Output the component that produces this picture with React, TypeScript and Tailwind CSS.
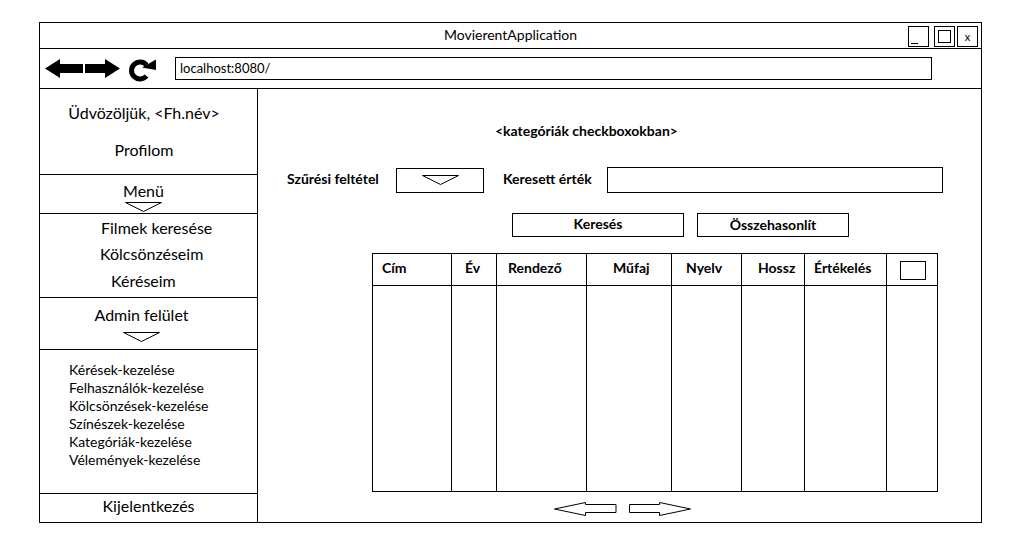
import React from "react";

const font = { fontFamily: "Lato, 'Open Sans', sans-serif" };

function DownTriangle({ w = 38, h = 11 }: { w?: number; h?: number }) {
  return (
    <svg width={w} height={h} viewBox={`0 0 ${w} ${h}`} className="block">
      <polygon points={`0.5,0.5 ${w - 0.5},0.5 ${w / 2},${h - 0.5}`} fill="white" stroke="black" strokeWidth="1" />
    </svg>
  );
}

function NavArrows() {
  return (
    <div className="flex items-center">
      <svg width="38" height="19" viewBox="0 0 38 19" className="block">
        <polygon points="0,9.5 15,0 15,5 38,5 38,14 15,14 15,19" fill="black" />
      </svg>
      <svg width="35" height="19" viewBox="0 0 35 19" className="block ml-[2px]">
        <polygon points="35,9.5 20,0 20,5 0,5 0,14 20,14 20,19" fill="black" />
      </svg>
      <svg width="30" height="23" viewBox="0 0 30 23" className="block ml-[8px] mt-[4px]">
        <path d="M18.5 6 A8.5 8.5 0 1 0 18.5 17" fill="none" stroke="black" strokeWidth="5" />
        <polygon points="14,8.5 28,0.5 28,11" fill="black" />
      </svg>
    </div>
  );
}

function PagerArrow({ dir }: { dir: "left" | "right" }) {
  const pts =
    dir === "left"
      ? "0.5,7 31.5,0.5 31.5,2.5 62,2.5 62,10.5 31.5,10.5 31.5,13.5"
      : "61.5,7 30.5,0.5 30.5,2.5 0.5,2.5 0.5,10.5 30.5,10.5 30.5,13.5";
  return (
    <svg width="63" height="15" viewBox="0 0 63 15" className="block">
      <polygon points={pts} fill="white" stroke="black" strokeWidth="1" />
    </svg>
  );
}

const columns = [
  { label: "Cím", w: "w-[79px]", pl: "pl-[9px]" },
  { label: "Év", w: "w-[45px]", pl: "pl-[13px]" },
  { label: "Rendező", w: "w-[90px]", pl: "pl-[11px]" },
  { label: "Műfaj", w: "w-[85px]", pl: "pl-[26px]" },
  { label: "Nyelv", w: "w-[70px]", pl: "pl-[14px]" },
  { label: "Hossz", w: "w-[63px]", pl: "pl-[16px]" },
  { label: "Értékelés", w: "w-[82px]", pl: "pl-[9px]" },
];

const adminItems = [
  "Kérések-kezelése",
  "Felhasználók-kezelése",
  "Kölcsönzések-kezelése",
  "Színészek-kezelése",
  "Kategóriák-kezelése",
  "Vélemények-kezelése",
];

export default function App() {
  return (
    <div className="min-h-screen bg-white pt-[22px] pl-[39px] text-black" style={font}>
      <div className="w-[943px] h-[501px] border border-black flex flex-col">
        {/* Title bar */}
        <div className="h-[26px] border-b border-black relative flex items-center justify-center">
          <span className="text-[14px] leading-none -mt-[2px]">MovierentApplication</span>
          <div className="absolute right-[3px] top-[3px] flex gap-[5px]">
            <div className="w-[21px] h-[21px] border border-black relative">
              <div className="absolute left-[2px] bottom-[2px] w-[7px] h-[1.5px] bg-black" />
            </div>
            <div className="w-[21px] h-[21px] border border-black flex items-center justify-center">
              <div className="w-[13px] h-[13px] border border-black" />
            </div>
            <div className="w-[21px] h-[21px] border border-black flex items-center justify-center -ml-[3px]">
              <span className="text-[11px] leading-none">x</span>
            </div>
          </div>
        </div>

        {/* Toolbar */}
        <div className="h-[40px] border-b border-black flex items-center pl-[5px]">
          <NavArrows />
          <div className="ml-[17px] w-[757px] h-[23px] border border-black flex items-center pl-[4px]">
            <span className="text-[13px] leading-none">localhost:8080/</span>
          </div>
        </div>

        {/* Body */}
        <div className="flex flex-1 min-h-0">
          {/* Sidebar */}
          <div className="w-[218px] border-r border-black flex flex-col">
            <div className="h-[86px] border-b border-black flex flex-col items-center pr-[9px] text-[16px]">
              <div className="mt-[14px] leading-[19px]">Üdvözöljük, &lt;Fh.név&gt;</div>
              <div className="mt-[18px] leading-[19px]">Profilom</div>
            </div>
            <div className="h-[39px] border-b border-black flex flex-col items-center pr-[10px] text-[16px]">
              <div className="mt-[6px] leading-[19px]">Menü</div>
              <div className="mt-[2px]">
                <DownTriangle w={37} h={10} />
              </div>
            </div>
            <div className="h-[84px] border-b border-black flex flex-col text-[16px]">
              <div className="mt-[4px] ml-[61px] leading-[19px]">Filmek keresése</div>
              <div className="mt-[7px] ml-[60px] leading-[19px]">Kölcsönzéseim</div>
              <div className="mt-[8px] ml-[71px] leading-[19px]">Kéréseim</div>
            </div>
            <div className="h-[52px] border-b border-black flex flex-col items-center pr-[14px] text-[16px]">
              <div className="mt-[7px] leading-[19px]">Admin felület</div>
              <div className="mt-[8px]">
                <DownTriangle w={37} h={10} />
              </div>
            </div>
            <div className="h-[144px] border-b border-black flex flex-col pl-[29px] pt-[11px] text-[14px] leading-[18px]">
              {adminItems.map((t) => (
                <div key={t}>{t}</div>
              ))}
            </div>
            <div className="flex-1 flex items-center justify-center pb-[5px] text-[16px] leading-none">
              Kijelentkezés
            </div>
          </div>

          {/* Main */}
          <div className="flex-1 flex flex-col text-[14px] font-bold">
            <div className="mt-[33px] ml-[237px] leading-[17px]">&lt;kategóriák checkboxokban&gt;</div>

            <div className="mt-[28px] flex items-center h-[26px] ml-[29px]">
              <div className="w-[109px] leading-none -mt-[2px]">Szűrési feltétel</div>
              <div className="w-[88px] h-[25px] border border-black flex items-center justify-center">
                <DownTriangle w={37} h={10} />
              </div>
              <div className="ml-[19px] w-[104px] leading-none -mt-[2px]">Keresett érték</div>
              <div className="w-[336px] h-[26px] border border-black" />
            </div>

            <div className="mt-[20px] flex h-[24px]">
              <div className="ml-[254px] w-[172px] border border-black flex items-center justify-center leading-none">
                <span className="-mt-[2px]">Keresés</span>
              </div>
              <div className="ml-[13px] w-[152px] border border-black flex items-center justify-center leading-none">
                <span className="-mt-[1px]">Összehasonlít</span>
              </div>
            </div>

            <div className="mt-[16px] ml-[114px] w-[566px] h-[239px] border border-black flex">
              {columns.map((c) => (
                <div key={c.label} className={`${c.w} border-r border-black flex flex-col`}>
                  <div className={`h-[32px] border-b border-black flex items-center ${c.pl} leading-none`}>
                    <span className="-mt-[3px]">{c.label}</span>
                  </div>
                </div>
              ))}
              <div className="flex-1 flex flex-col">
                <div className="h-[32px] border-b border-black pl-[13px] pt-[7px]">
                  <div className="w-[26px] h-[19px] border border-black" />
                </div>
              </div>
            </div>

            <div className="mt-[10px] ml-[296px] flex gap-[12px]">
              <PagerArrow dir="left" />
              <PagerArrow dir="right" />
            </div>
          </div>
        </div>
      </div>
    </div>
  );
}
